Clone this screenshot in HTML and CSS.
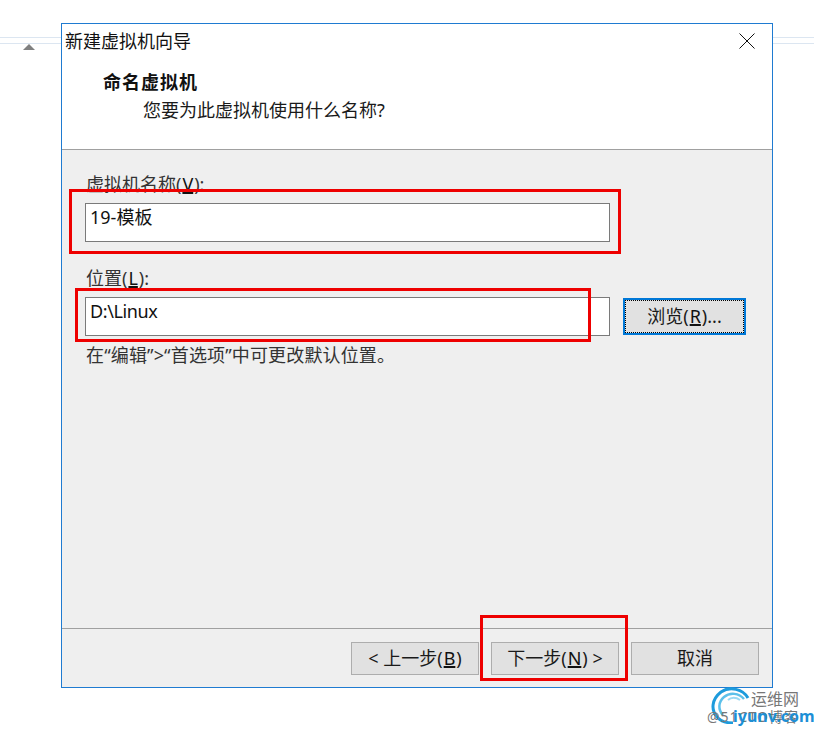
FILE: index.html
```html
<!DOCTYPE html>
<html lang="zh-CN">

<head>
  <meta charset="UTF-8">
  <meta name="viewport" content="width=device-width, initial-scale=1.0">
  <title>新建虚拟机向导</title>
  <link rel="stylesheet" href="styles.css">
</head>

<body>
  <div class="page">
    <div class="gutter"><span class="arrow"></span></div>
    <div class="wizard">
      <div class="head">
        <div class="title-row">
          <span>新建虚拟机向导</span>
          <svg class="close" width="16" height="16" viewBox="0 0 16 16">
            <path d="M.5.5l15 15M15.500.5l-15 15" stroke="#111" stroke-width="1" fill="none" />
          </svg>
        </div>
        <h1>命名虚拟机</h1>
        <p>您要为此虚拟机使用什么名称?</p>
      </div>
      <div class="content">
        <label class="label">虚拟机名称(<u>V</u>):</label>
        <div class="field">19-模板</div>
        <label class="label second">位置(<u>L</u>):</label>
        <div class="row">
          <div class="field path">D:\Linux</div>
          <button class="btn browse">浏览(<u>R</u>)...</button>
        </div>
        <div class="hint">在“编辑”&gt;“首选项”中可更改默认位置。</div>
      </div>
      <div class="foot">
        <button class="btn">&lt; 上一步(<u>B</u>)</button>
        <button class="btn">下一步(<u>N</u>) &gt;</button>
        <button class="btn">取消</button>
      </div>
    </div>

    <!-- 标注框 -->
    <div class="mark mark-name"></div>
    <div class="mark mark-path"></div>
    <div class="mark mark-next"></div>

    <!-- 水印 -->
    <div class="stamp">
      <svg class="stamp-logo" width="44" height="38" viewBox="0 0 44 38">
        <path d="M38 12C33 3 20 0 11 6C2 13 0 24 8 32C12 36 18 37 23 37" stroke="#1d9bdc" stroke-width="3" fill="none" />
        <path d="M34 13C29 7 20 6 14 11C8 16 8 24 13 29" stroke="#5cc0ea" stroke-width="2.500" fill="none" />
        <path d="M30 14C26 11 21 11 18 14" stroke="#9ad9f3" stroke-width="2" fill="none" />
      </svg>
      <span class="stamp-site">运维网</span>
      <span class="stamp-blog">@51CTO博客</span>
      <span class="stamp-url">iyunv.com</span>
    </div>
  </div>
</body>

</html>
```

FILE: styles.css
```css
* {
  padding: 0;
  margin: 0;
  box-sizing: border-box;
}

body {
  font-family: "Noto Sans", "Noto Sans CJK SC", sans-serif;
  font-size: 18px;
  color: #1a1a1a;
  background: #fff;
}

.page {
  position: relative;
  width: 814px;
  height: 733px;
  overflow: hidden;
  display: flex;
  background:
    linear-gradient(#dce6f1, #dce6f1) 0 37px / 100% 1px no-repeat,
    linear-gradient(#dce6f1, #dce6f1) 0 43px / 100% 1px no-repeat,
    #fff;
}

.gutter {
  width: 61px;
  flex: none;
}

.arrow {
  display: block;
  width: 0;
  height: 0;
  margin: 44px 0 0 23px;
  border-left: 6px solid transparent;
  border-right: 6px solid transparent;
  border-bottom: 6px solid #808080;
}

.wizard {
  width: 712px;
  height: 665px;
  margin-top: 23px;
  border: solid 1px #1f7bd1;
  background: #efefef;
  display: flex;
  flex-direction: column;
}

.head {
  height: 126px;
  background: #fff;
  border-bottom: solid 1px #a0a0a0;
}

.title-row {
  height: 34px;
  padding: 0 17px 0 3px;
  display: flex;
  justify-content: space-between;
  align-items: center;
  line-height: 34px;
  color: #111;
}

.close {
  display: block;
}

.head h1 {
  font-size: 18px;
  font-weight: bold;
  line-height: 28px;
  margin-top: 10px;
  padding-left: 41px;
  letter-spacing: 1px;
  color: #111;
}

.head p {
  line-height: 28px;
  padding-left: 81px;
}

.content {
  flex: 1;
  padding: 22px 0 0 23px;
}

.label {
  display: block;
  height: 24px;
  line-height: 24px;
  padding-left: 1px;
  margin-bottom: 7px;
  color: #333;
}

u {
  margin: 0 1px;
  color: #111;
  text-decoration-thickness: 2px;
}

.second {
  margin-top: 24px;
}

.field {
  width: 525px;
  height: 39px;
  padding: 0 4px;
  line-height: 27px;
  border: solid 1px #7a7a7a;
  background: #fff;
  color: #111;
}

.path {
  letter-spacing: -0.4px;
}

.row {
  display: flex;
  align-items: center;
  gap: 13px;
}

.hint {
  height: 24px;
  line-height: 24px;
  margin-top: 7px;
  padding-left: 1px;
  letter-spacing: 0.15px;
  color: #333;
}

.foot {
  height: 59px;
  padding: 13px 13px 0 0;
  border-top: solid 1px #a0a0a0;
  display: flex;
  justify-content: flex-end;
  gap: 12px;
}

.btn {
  width: 128px;
  height: 33px;
  border: solid 1px #adadad;
  background: #e1e1e1;
  font-family: inherit;
  font-size: 18px;
  line-height: 29px;
  color: #1a1a1a;
}

.browse {
  width: 123px;
  height: 37px;
  border: solid 2px #0078d7;
  outline: 1px dotted #000;
  outline-offset: -3px;
}

.mark {
  position: absolute;
  border: solid 3px #ee0000;
}

.mark-name {
  left: 69px;
  top: 189px;
  width: 552px;
  height: 65px;
}

.mark-path {
  left: 75px;
  top: 288px;
  width: 516px;
  height: 54px;
}

.mark-next {
  left: 480px;
  top: 615px;
  width: 148px;
  height: 66px;
}

.stamp {
  position: absolute;
  left: 700px;
  top: 685px;
  width: 114px;
  height: 48px;
}

.stamp-logo {
  position: absolute;
  left: 10px;
  top: 1px;
}

.stamp-site {
  position: absolute;
  left: 51px;
  top: 3px;
  font-size: 16px;
  line-height: 22px;
  color: #777;
}

.stamp-blog {
  position: absolute;
  left: 7px;
  top: 22px;
  font-size: 14px;
  line-height: 20px;
  letter-spacing: 1px;
  color: #777;
}

.stamp-url {
  position: absolute;
  left: 33px;
  top: 21px;
  font-size: 16px;
  font-weight: bold;
  line-height: 20px;
  color: #1d8fd6;
}
```
